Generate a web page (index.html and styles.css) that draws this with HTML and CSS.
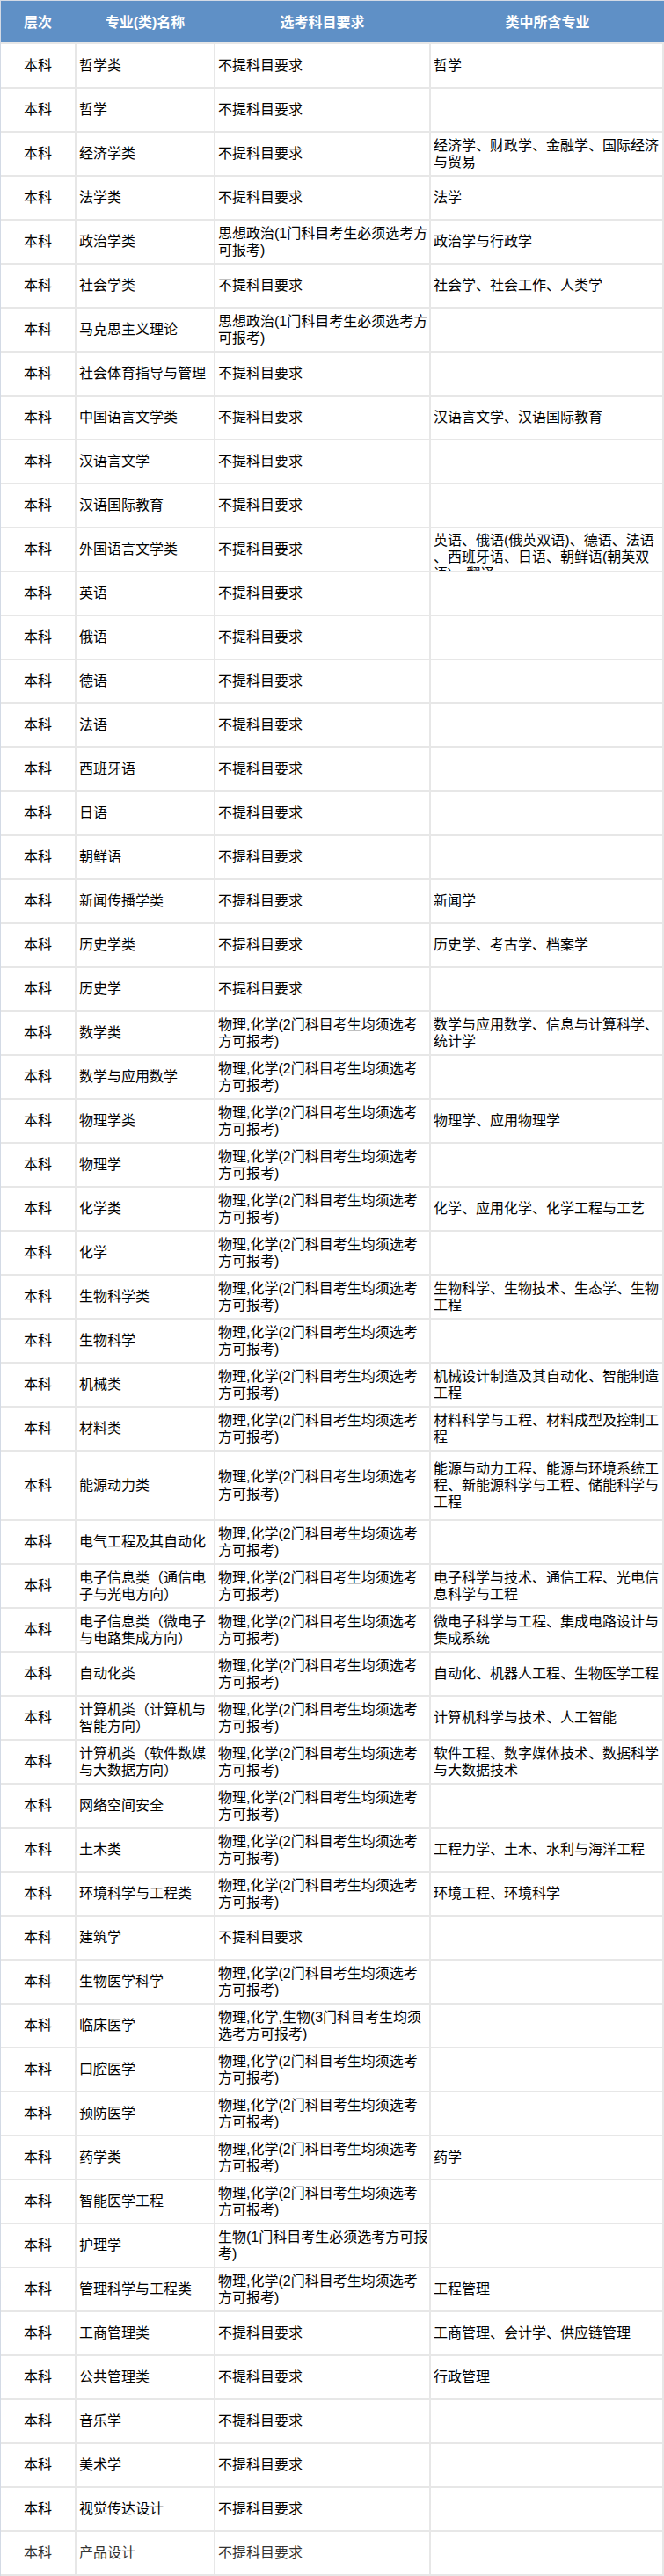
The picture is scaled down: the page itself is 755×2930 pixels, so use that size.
FILE: index.html
```html
<!DOCTYPE html>
<html lang="zh-CN">
<head>
<meta charset="utf-8">
<title>专业选考科目要求</title>
<link rel="stylesheet" href="styles.css">
</head>
<body>
<div class="sheet">
  <div class="head">
    <div class="h">层次</div>
    <div class="h">专业(类)名称</div>
    <div class="h">选考科目要求</div>
    <div class="h">类中所含专业</div>
  </div>
  <div class="body">
    <div class="row first"><div class="c lv">本科</div><div class="c">哲学类</div><div class="c req">不提科目要求</div><div class="c inc">哲学</div></div>
    <div class="row"><div class="c lv">本科</div><div class="c">哲学</div><div class="c req">不提科目要求</div><div class="c inc"></div></div>
    <div class="row"><div class="c lv">本科</div><div class="c">经济学类</div><div class="c req">不提科目要求</div><div class="c inc">经济学、财政学、金融学、国际经济与贸易</div></div>
    <div class="row"><div class="c lv">本科</div><div class="c">法学类</div><div class="c req">不提科目要求</div><div class="c inc">法学</div></div>
    <div class="row"><div class="c lv">本科</div><div class="c">政治学类</div><div class="c req">思想政治(1门科目考生必须选考方可报考)</div><div class="c inc">政治学与行政学</div></div>
    <div class="row"><div class="c lv">本科</div><div class="c">社会学类</div><div class="c req">不提科目要求</div><div class="c inc">社会学、社会工作、人类学</div></div>
    <div class="row"><div class="c lv">本科</div><div class="c">马克思主义理论</div><div class="c req">思想政治(1门科目考生必须选考方可报考)</div><div class="c inc"></div></div>
    <div class="row"><div class="c lv">本科</div><div class="c">社会体育指导与管理</div><div class="c req">不提科目要求</div><div class="c inc"></div></div>
    <div class="row"><div class="c lv">本科</div><div class="c">中国语言文学类</div><div class="c req">不提科目要求</div><div class="c inc">汉语言文学、汉语国际教育</div></div>
    <div class="row"><div class="c lv">本科</div><div class="c">汉语言文学</div><div class="c req">不提科目要求</div><div class="c inc"></div></div>
    <div class="row"><div class="c lv">本科</div><div class="c">汉语国际教育</div><div class="c req">不提科目要求</div><div class="c inc"></div></div>
    <div class="row"><div class="c lv">本科</div><div class="c">外国语言文学类</div><div class="c req">不提科目要求</div><div class="c inc clip">英语、俄语(俄英双语)、德语、法语、西班牙语、日语、朝鲜语(朝英双语)、翻译</div></div>
    <div class="row"><div class="c lv">本科</div><div class="c">英语</div><div class="c req">不提科目要求</div><div class="c inc"></div></div>
    <div class="row"><div class="c lv">本科</div><div class="c">俄语</div><div class="c req">不提科目要求</div><div class="c inc"></div></div>
    <div class="row"><div class="c lv">本科</div><div class="c">德语</div><div class="c req">不提科目要求</div><div class="c inc"></div></div>
    <div class="row"><div class="c lv">本科</div><div class="c">法语</div><div class="c req">不提科目要求</div><div class="c inc"></div></div>
    <div class="row"><div class="c lv">本科</div><div class="c">西班牙语</div><div class="c req">不提科目要求</div><div class="c inc"></div></div>
    <div class="row"><div class="c lv">本科</div><div class="c">日语</div><div class="c req">不提科目要求</div><div class="c inc"></div></div>
    <div class="row"><div class="c lv">本科</div><div class="c">朝鲜语</div><div class="c req">不提科目要求</div><div class="c inc"></div></div>
    <div class="row"><div class="c lv">本科</div><div class="c">新闻传播学类</div><div class="c req">不提科目要求</div><div class="c inc">新闻学</div></div>
    <div class="row"><div class="c lv">本科</div><div class="c">历史学类</div><div class="c req">不提科目要求</div><div class="c inc">历史学、考古学、档案学</div></div>
    <div class="row"><div class="c lv">本科</div><div class="c">历史学</div><div class="c req">不提科目要求</div><div class="c inc"></div></div>
    <div class="row"><div class="c lv">本科</div><div class="c">数学类</div><div class="c req">物理,化学(2门科目考生均须选考方可报考)</div><div class="c inc">数学与应用数学、信息与计算科学、统计学</div></div>
    <div class="row"><div class="c lv">本科</div><div class="c">数学与应用数学</div><div class="c req">物理,化学(2门科目考生均须选考方可报考)</div><div class="c inc"></div></div>
    <div class="row"><div class="c lv">本科</div><div class="c">物理学类</div><div class="c req">物理,化学(2门科目考生均须选考方可报考)</div><div class="c inc">物理学、应用物理学</div></div>
    <div class="row"><div class="c lv">本科</div><div class="c">物理学</div><div class="c req">物理,化学(2门科目考生均须选考方可报考)</div><div class="c inc"></div></div>
    <div class="row"><div class="c lv">本科</div><div class="c">化学类</div><div class="c req">物理,化学(2门科目考生均须选考方可报考)</div><div class="c inc">化学、应用化学、化学工程与工艺</div></div>
    <div class="row"><div class="c lv">本科</div><div class="c">化学</div><div class="c req">物理,化学(2门科目考生均须选考方可报考)</div><div class="c inc"></div></div>
    <div class="row"><div class="c lv">本科</div><div class="c">生物科学类</div><div class="c req">物理,化学(2门科目考生均须选考方可报考)</div><div class="c inc">生物科学、生物技术、生态学、生物工程</div></div>
    <div class="row"><div class="c lv">本科</div><div class="c">生物科学</div><div class="c req">物理,化学(2门科目考生均须选考方可报考)</div><div class="c inc"></div></div>
    <div class="row"><div class="c lv">本科</div><div class="c">机械类</div><div class="c req">物理,化学(2门科目考生均须选考方可报考)</div><div class="c inc">机械设计制造及其自动化、智能制造工程</div></div>
    <div class="row"><div class="c lv">本科</div><div class="c">材料类</div><div class="c req">物理,化学(2门科目考生均须选考方可报考)</div><div class="c inc">材料科学与工程、材料成型及控制工程</div></div>
    <div class="row tall"><div class="c lv">本科</div><div class="c">能源动力类</div><div class="c req">物理,化学(2门科目考生均须选考方可报考)</div><div class="c inc">能源与动力工程、能源与环境系统工程、新能源科学与工程、储能科学与工程</div></div>
    <div class="row"><div class="c lv">本科</div><div class="c">电气工程及其自动化</div><div class="c req">物理,化学(2门科目考生均须选考方可报考)</div><div class="c inc"></div></div>
    <div class="row"><div class="c lv">本科</div><div class="c">电子信息类（通信电子与光电方向）</div><div class="c req">物理,化学(2门科目考生均须选考方可报考)</div><div class="c inc">电子科学与技术、通信工程、光电信息科学与工程</div></div>
    <div class="row"><div class="c lv">本科</div><div class="c">电子信息类（微电子与电路集成方向）</div><div class="c req">物理,化学(2门科目考生均须选考方可报考)</div><div class="c inc">微电子科学与工程、集成电路设计与集成系统</div></div>
    <div class="row"><div class="c lv">本科</div><div class="c">自动化类</div><div class="c req">物理,化学(2门科目考生均须选考方可报考)</div><div class="c inc">自动化、机器人工程、生物医学工程</div></div>
    <div class="row"><div class="c lv">本科</div><div class="c">计算机类（计算机与智能方向）</div><div class="c req">物理,化学(2门科目考生均须选考方可报考)</div><div class="c inc">计算机科学与技术、人工智能</div></div>
    <div class="row"><div class="c lv">本科</div><div class="c">计算机类（软件数媒与大数据方向）</div><div class="c req">物理,化学(2门科目考生均须选考方可报考)</div><div class="c inc">软件工程、数字媒体技术、数据科学与大数据技术</div></div>
    <div class="row"><div class="c lv">本科</div><div class="c">网络空间安全</div><div class="c req">物理,化学(2门科目考生均须选考方可报考)</div><div class="c inc"></div></div>
    <div class="row"><div class="c lv">本科</div><div class="c">土木类</div><div class="c req">物理,化学(2门科目考生均须选考方可报考)</div><div class="c inc">工程力学、土木、水利与海洋工程</div></div>
    <div class="row"><div class="c lv">本科</div><div class="c">环境科学与工程类</div><div class="c req">物理,化学(2门科目考生均须选考方可报考)</div><div class="c inc">环境工程、环境科学</div></div>
    <div class="row"><div class="c lv">本科</div><div class="c">建筑学</div><div class="c req">不提科目要求</div><div class="c inc"></div></div>
    <div class="row"><div class="c lv">本科</div><div class="c">生物医学科学</div><div class="c req">物理,化学(2门科目考生均须选考方可报考)</div><div class="c inc"></div></div>
    <div class="row"><div class="c lv">本科</div><div class="c">临床医学</div><div class="c req">物理,化学,生物(3门科目考生均须选考方可报考)</div><div class="c inc"></div></div>
    <div class="row"><div class="c lv">本科</div><div class="c">口腔医学</div><div class="c req">物理,化学(2门科目考生均须选考方可报考)</div><div class="c inc"></div></div>
    <div class="row"><div class="c lv">本科</div><div class="c">预防医学</div><div class="c req">物理,化学(2门科目考生均须选考方可报考)</div><div class="c inc"></div></div>
    <div class="row"><div class="c lv">本科</div><div class="c">药学类</div><div class="c req">物理,化学(2门科目考生均须选考方可报考)</div><div class="c inc">药学</div></div>
    <div class="row"><div class="c lv">本科</div><div class="c">智能医学工程</div><div class="c req">物理,化学(2门科目考生均须选考方可报考)</div><div class="c inc"></div></div>
    <div class="row"><div class="c lv">本科</div><div class="c">护理学</div><div class="c req">生物(1门科目考生必须选考方可报考)</div><div class="c inc"></div></div>
    <div class="row"><div class="c lv">本科</div><div class="c">管理科学与工程类</div><div class="c req">物理,化学(2门科目考生均须选考方可报考)</div><div class="c inc">工程管理</div></div>
    <div class="row"><div class="c lv">本科</div><div class="c">工商管理类</div><div class="c req">不提科目要求</div><div class="c inc">工商管理、会计学、供应链管理</div></div>
    <div class="row"><div class="c lv">本科</div><div class="c">公共管理类</div><div class="c req">不提科目要求</div><div class="c inc">行政管理</div></div>
    <div class="row"><div class="c lv">本科</div><div class="c">音乐学</div><div class="c req">不提科目要求</div><div class="c inc"></div></div>
    <div class="row"><div class="c lv">本科</div><div class="c">美术学</div><div class="c req">不提科目要求</div><div class="c inc"></div></div>
    <div class="row"><div class="c lv">本科</div><div class="c">视觉传达设计</div><div class="c req">不提科目要求</div><div class="c inc"></div></div>
    <div class="row last"><div class="c lv">本科</div><div class="c">产品设计</div><div class="c req">不提科目要求</div><div class="c inc"></div></div>
  </div>
</div>
</body>
</html>
```
FILE: styles.css
```css
html, body {
  margin: 0;
  padding: 0;
  background: #ffffff;
}

body {
  font-family: "Liberation Sans", "Noto Sans CJK SC", sans-serif;
  font-size: 16px;
  line-height: 19.2px;
  color: #000000;
}

.sheet {
  width: 754px;
  border-top: 1px solid #d3dae5;
  border-left: 1px solid #d3dae5;
}

.head {
  display: grid;
  grid-template-columns: 84px 156px 243px 265px;
  column-gap: 2px;
  height: 47px;
  background: #5f90c6;
}

.h {
  display: flex;
  align-items: center;
  justify-content: center;
  color: #ffffff;
  font-weight: 700;
  padding-top: 2px;
}

.body {
  display: flex;
  flex-direction: column;
  gap: 2px;
  background: #e7e7e7;
  padding: 2px 2px 2px 0;
}

.row {
  display: grid;
  grid-template-columns: 84px 156px 243px 263px;
  column-gap: 2px;
  height: 48px;
}

.row.first {
  height: 49px;
}

.row.tall {
  height: 77px;
}

.c {
  display: flex;
  align-items: center;
  background: #ffffff;
  padding: 0 3px;
  overflow: hidden;
  word-break: break-all;
}

.c.lv {
  justify-content: center;
  padding: 0;
}

.c.req,
.c.inc {
  padding: 0 0 0 3px;
}

.c.clip {
  align-items: flex-start;
  padding-top: 4px;
  line-break: anywhere;
}

.row.last .c {
  color: #333333;
}
```
